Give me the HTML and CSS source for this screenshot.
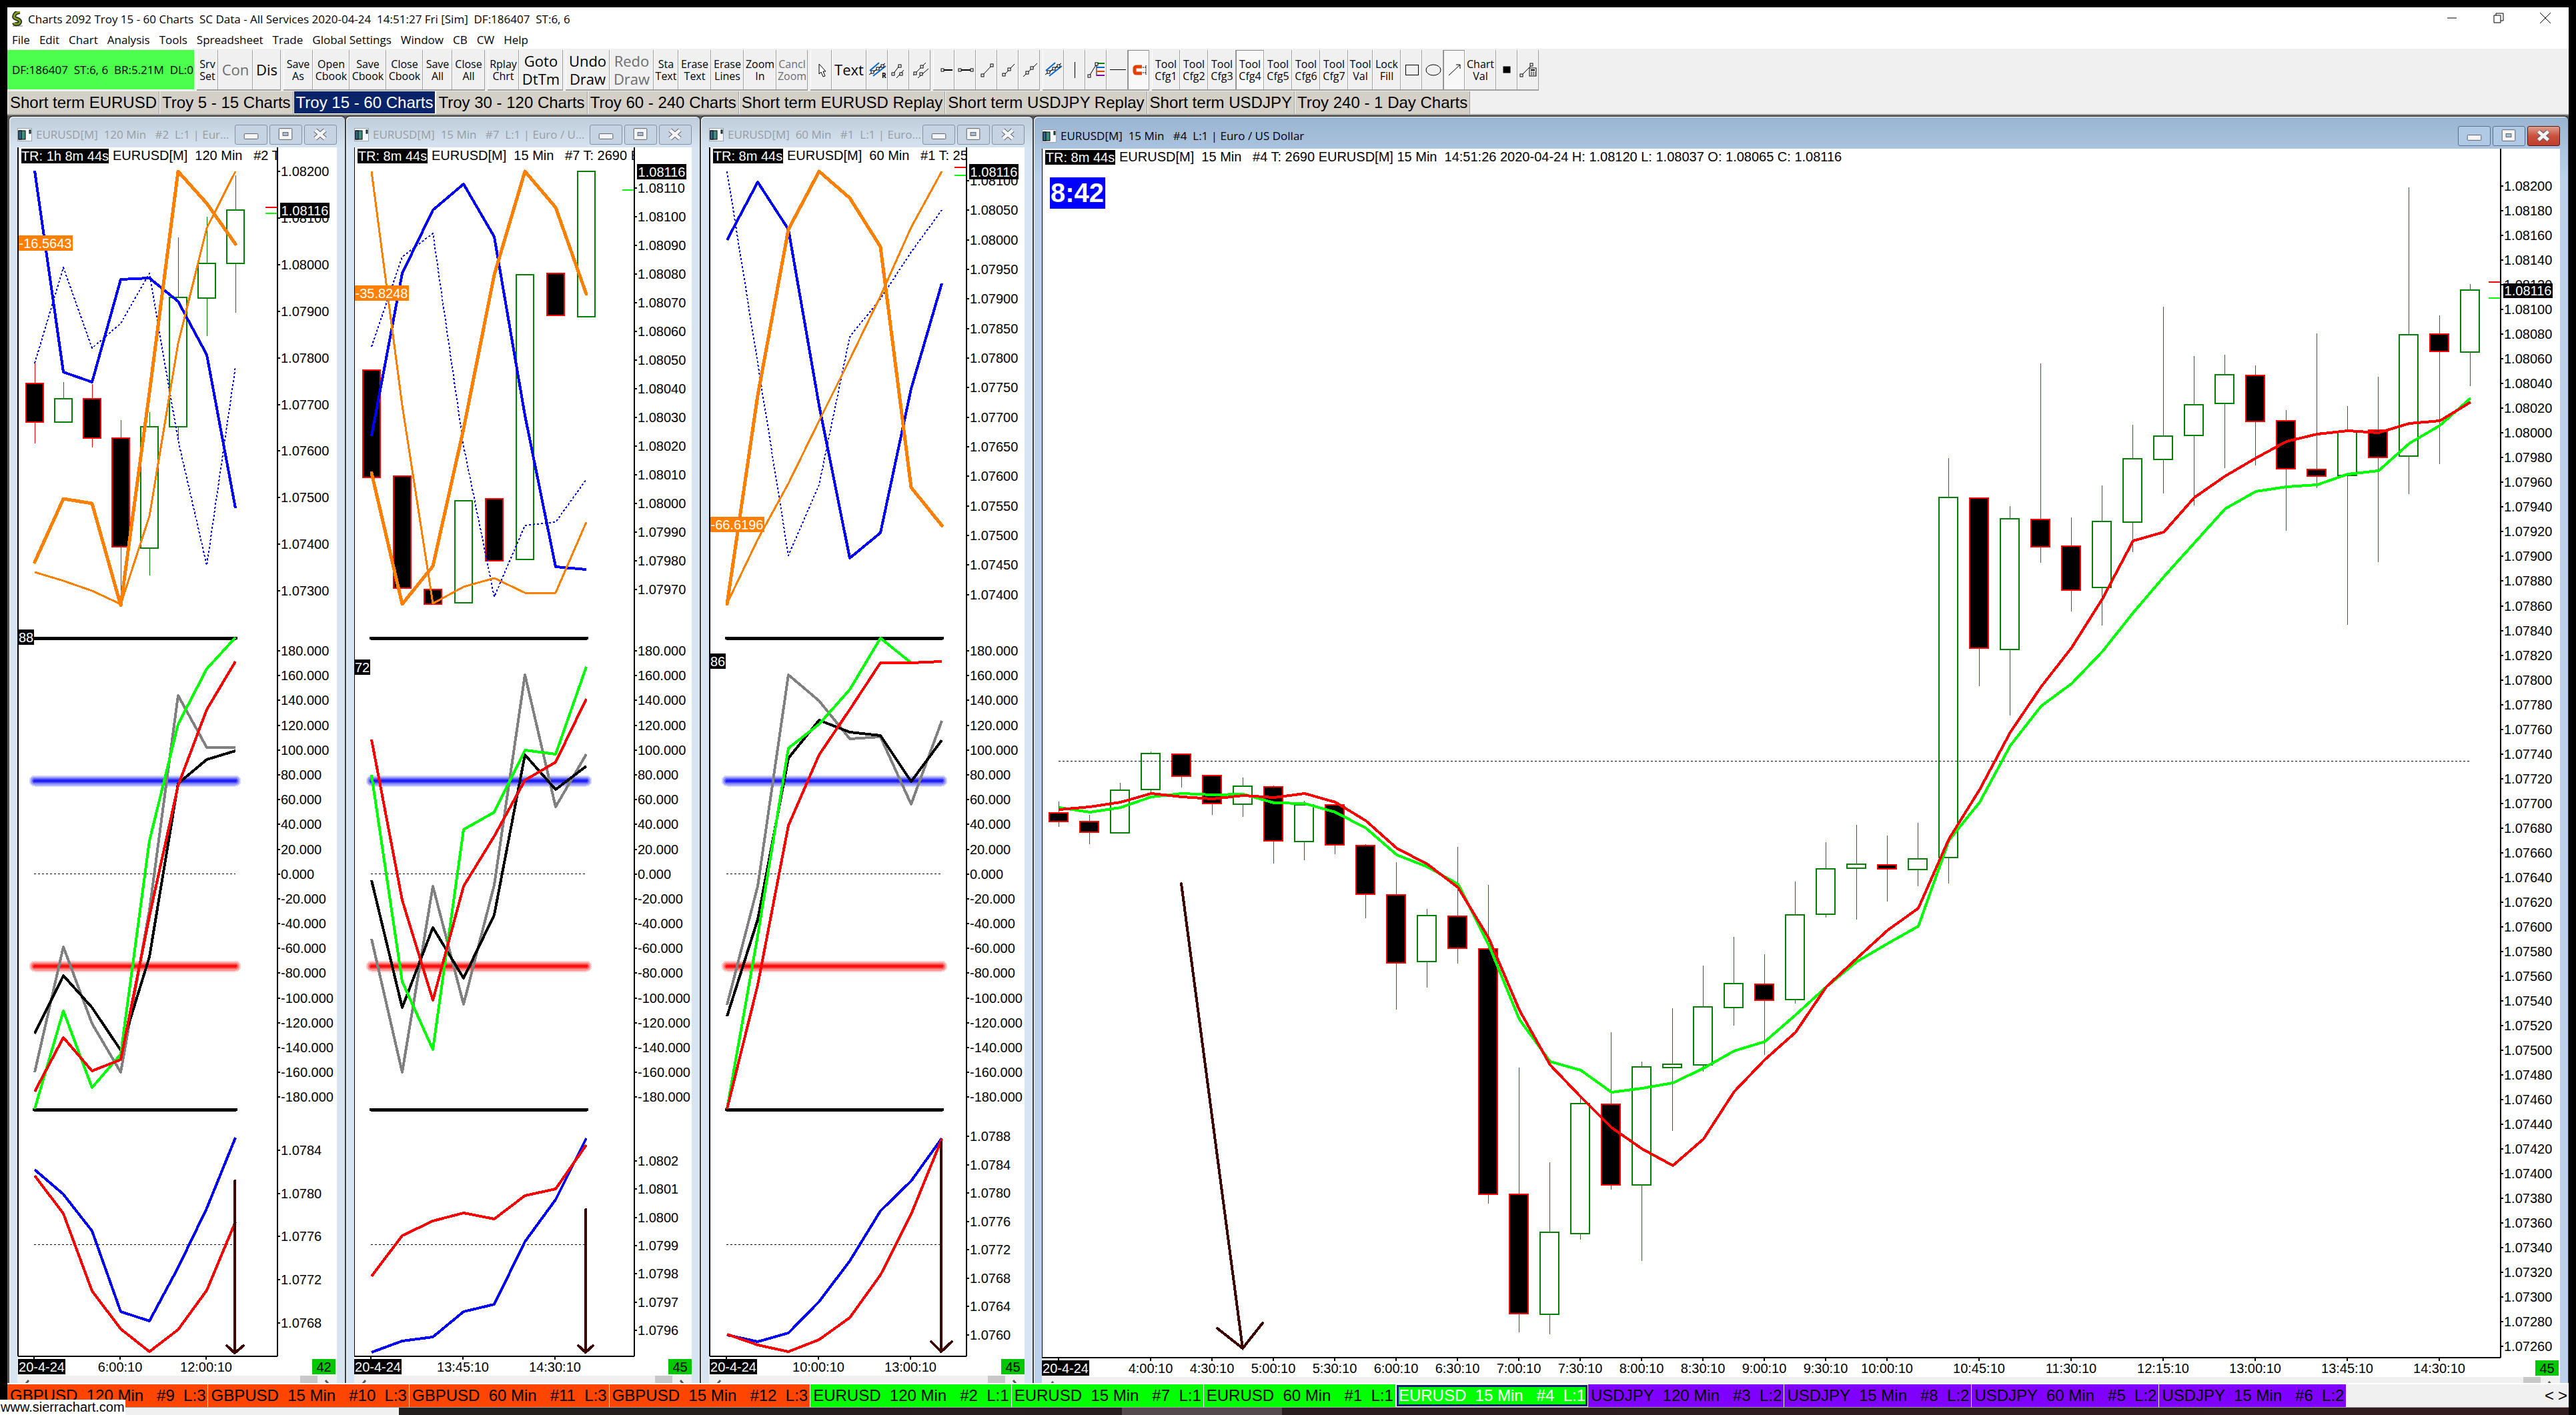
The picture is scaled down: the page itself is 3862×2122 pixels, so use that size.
FILE: index.html
```html
<!DOCTYPE html>
<html lang="en">
<head>
<meta charset="utf-8">
<title>Charts 2092 Troy 15 - 60 Charts</title>
<link rel="stylesheet" href="styles.css">
</head>
<body>
<svg class="defs" aria-hidden="true">
  <symbol id="i-rays" viewBox="0 0 32 32"><path d="M5 17L19 5M10 25L29 10" stroke="#0066cc" stroke-width="2"/><path d="M7 21L25 9M4 23L28 6"/><g fill="#fff"><rect x="7" y="17" width="4" height="4"/><rect x="15" y="12" width="4" height="4"/><rect x="22" y="8" width="4" height="4"/></g></symbol>
  <symbol id="i-app" viewBox="0 0 22 20"><rect x=".5" y=".5" width="21" height="19" fill="#f4f8fb" stroke="#9aa4ae"/><rect x="2" y="4" width="10" height="13" fill="#3f8f7d"/><rect x="2" y="4" width="4" height="13" fill="#2f6f9a"/><rect x="18" y="3" width="2" height="5" fill="#3f8f7d"/></symbol>
  <symbol id="i-min" viewBox="0 0 48 28"><rect x="13.500" y="12.500" width="21" height="8" rx="1" fill="#f5f5f5" stroke="#5a5f68"/></symbol>
  <symbol id="i-max" viewBox="0 0 48 28"><rect x="13.500" y="4.500" width="20" height="17" rx="1" fill="#f5f5f5" stroke="#5a5f68"/><rect x="19.500" y="10.500" width="8" height="5" fill="#a9bdd6" stroke="#5a5f68"/></symbol>
  <symbol id="i-close" viewBox="0 0 48 28"><path d="M16 7L31 20M31 7L16 20" stroke="#5a5f68" stroke-width="7"/><path d="M16 7L31 20M31 7L16 20" stroke="#f5f5f5" stroke-width="5"/></symbol>
  <symbol id="i-left" viewBox="0 0 12 12"><path d="M8 7L3 13" stroke="#555" stroke-width="3"/></symbol>
  <symbol id="i-right" viewBox="0 0 12 12"><path d="M4 7L9 13" stroke="#555" stroke-width="3"/></symbol>
</svg>
<main class="app">
  <header class="titlebar">
    <svg class="logo" viewBox="0 0 20 24" aria-hidden="true"><path d="M3 21h15v2H3z" fill="#bbb"/><path d="M14 1c-6 0-9 4-9 7 0 4 10 3 9 8-1 4-8 4-9 1" fill="none" stroke="#222" stroke-width="6"/><path d="M14 1c-6 0-9 4-9 7 0 4 10 3 9 8-1 4-8 4-9 1" fill="none" stroke="#7c9c1c" stroke-width="3"/></svg>
    <h1>Charts 2092 Troy 15 - 60 Charts  SC Data - All Services 2020-04-24  14:51:27 Fri [Sim]  DF:186407  ST:6, 6</h1>
    <div class="sys">
      <button aria-label="Minimize"><svg viewBox="0 0 16 16"><path d="M1 8H15"/></svg></button>
      <button aria-label="Restore"><svg viewBox="0 0 16 16"><path d="M1 4H11V15H1ZM4 4V1H15V12H11"/></svg></button>
      <button aria-label="Close"><svg viewBox="0 0 16 16"><path d="M0 0L16 16M16 0L0 16"/></svg></button>
    </div>
  </header>
  <nav class="menu">
    <button>File</button><button>Edit</button><button>Chart</button><button>Analysis</button><button>Tools</button><button>Spreadsheet</button><button>Trade</button><button>Global Settings</button><button>Window</button><button>CB</button><button>CW</button><button>Help</button>
  </nav>
  <div class="toolbar">
    <div class="status">DF:186407  ST:6, 6  BR:5.21M  DL:0</div>
    <div class="group"><button class="w32">Srv<br>Set</button><button class="w52 big" disabled>Con</button><button class="w42 big">Dis</button></div>
    <div class="group"><button class="w44">Save<br>As</button><button class="w55">Open<br>Cbook</button><button class="w55">Save<br>Cbook</button><button class="w55">Close<br>Cbook</button><button class="w44">Save<br>All</button><button class="w49">Close<br>All</button></div>
    <div class="group"><button class="w47">Rplay<br>Chrt</button><button class="w66 big">Goto<br>DtTm</button></div>
    <div class="group"><button class="w66 big">Undo<br>Draw</button><button class="w66 big" disabled>Redo<br>Draw</button><button class="w37">Sta<br>Text</button><button class="w49">Erase<br>Text</button><button class="w49">Erase<br>Lines</button><button class="w49">Zoom<br>In</button><button class="w47" disabled>Cancl<br>Zoom</button></div>
    <div class="group">
      <button class="w32" aria-label="Pointer"><svg class="ic" viewBox="0 0 32 32"><path d="M13 7V22L16 19L19 26L22 25L19 18H23Z" fill="#fff"/></svg></button>
      <button class="w52 big">Text</button>
      <button class="w32" aria-label="Parallel rays R"><svg class="ic" viewBox="0 0 32 32"><use href="#i-rays"/><text x="23" y="28" class="mark">R</text></svg></button>
      <button class="w32" aria-label="Pitchfork"><svg class="ic" viewBox="0 0 32 32"><path d="M8 22L17 10M13 28L24 16"/><g fill="#fff"><rect x="6" y="20" width="4" height="4"/><rect x="16" y="8" width="4" height="4"/><rect x="18" y="20" width="4" height="4"/></g></svg></button>
      <button class="w32" aria-label="Channel"><svg class="ic" viewBox="0 0 32 32"><path d="M6 24L25 5M13 28L29 14"/><g fill="#fff"><rect x="7" y="19" width="4" height="4"/><rect x="17" y="9" width="4" height="4"/><rect x="16" y="20" width="4" height="4"/></g></svg></button>
    </div>
    <div class="group">
      <button class="w32" aria-label="Horizontal ray"><svg class="ic" viewBox="0 0 32 32"><path d="M14 16H29" stroke-width="2"/><rect x="12" y="14" width="4" height="4" fill="#fff"/></svg></button>
      <button class="w32" aria-label="Horizontal segment"><svg class="ic" viewBox="0 0 32 32"><path d="M8 16H26" stroke-width="2"/><g fill="#fff"><rect x="6" y="14" width="4" height="4"/><rect x="24" y="14" width="4" height="4"/></g></svg></button>
      <button class="w32" aria-label="Line"><svg class="ic" viewBox="0 0 32 32"><path d="M10 24L24 9"/><g fill="#fff"><rect x="8" y="22" width="4" height="4"/><rect x="22" y="7" width="4" height="4"/></g></svg></button>
      <button class="w32" aria-label="Ray"><svg class="ic" viewBox="0 0 32 32"><path d="M10 24L26 7"/><g fill="#fff"><rect x="8" y="21" width="4" height="4"/><rect x="16" y="13" width="4" height="4"/></g></svg></button>
      <button class="w32" aria-label="Extended line"><svg class="ic" viewBox="0 0 32 32"><path d="M7 26L28 6"/><g fill="#fff"><rect x="11" y="18" width="4" height="4"/><rect x="18" y="11" width="4" height="4"/></g></svg></button>
    </div>
    <div class="group">
      <button class="w32" aria-label="Parallel rays"><svg class="ic"><use href="#i-rays"/></svg></button>
      <button class="w32" aria-label="Vertical line"><svg class="ic" viewBox="0 0 32 32"><path d="M16.500 4V28"/></svg></button>
      <button class="w32" aria-label="Retracement"><svg class="ic" viewBox="0 0 32 32"><path d="M6 25L17 7M17 6V25"/><path d="M17 6H29" stroke="#008000" stroke-width="2"/><path d="M17 12H29" stroke="#0066cc" stroke-width="2"/><path d="M17 18H29" stroke="#e04000" stroke-width="2"/><path d="M17 24H29" stroke="#8000a0" stroke-width="2"/><g fill="#fff"><rect x="4" y="23" width="4" height="4"/><rect x="15" y="5" width="4" height="4"/></g></svg></button>
      <button class="w32" aria-label="Horizontal line"><svg class="ic" viewBox="0 0 32 32"><path d="M5 15.500H29"/></svg></button>
      <button class="w32 on" aria-label="Snap"><svg class="ic" viewBox="0 0 32 32"><path d="M21 11H13Q10 11 10 14V18Q10 21 13 21H21" stroke="#e04000" stroke-width="5"/><path d="M27 9V24M22 12H27M22 20H27" stroke-dasharray="2 1"/></svg></button>
    </div>
    <div class="group">
      <button class="w42">Tool<br>Cfg1</button><button class="w42">Tool<br>Cfg2</button><button class="w42">Tool<br>Cfg3</button><button class="w42 on">Tool<br>Cfg4</button><button class="w42">Tool<br>Cfg5</button><button class="w42">Tool<br>Cfg6</button><button class="w42">Tool<br>Cfg7</button><button class="w37">Tool<br>Val</button><button class="w42">Lock<br>Fill</button>
      <button class="w32" aria-label="Rectangle"><svg class="ic" viewBox="0 0 32 32"><rect x="7.500" y="8.500" width="19" height="15"/></svg></button>
      <button class="w32" aria-label="Ellipse"><svg class="ic" viewBox="0 0 32 32"><ellipse cx="17" cy="16" rx="11" ry="8"/></svg></button>
      <button class="w32 on" aria-label="Arrow"><svg class="ic" viewBox="0 0 32 32"><path d="M8 24L25 8M19 8H25V14"/></svg></button>
      <button class="w47">Chart<br>Val</button>
      <button class="w32" aria-label="Marker"><svg class="ic" viewBox="0 0 32 32"><rect x="11" y="11" width="10" height="9" fill="#000"/></svg></button>
      <button class="w32" aria-label="Calculator"><svg class="ic" viewBox="0 0 32 32"><path d="M6 24L21 9"/><g fill="#fff"><rect x="4" y="22" width="4" height="4"/><rect x="19" y="6" width="4" height="4"/><rect x="18" y="13" width="10" height="12"/></g><path d="M20 16H26" stroke-width="2"/><path d="M20 19H27M20 21H27M20 23H27" stroke-dasharray="2 1"/></svg></button>
    </div>
  </div>
  <nav class="books">
    <button>Short term EURUSD</button><button>Troy 5 - 15 Charts</button><button class="current">Troy 15 - 60 Charts</button><button>Troy 30 - 120 Charts</button><button>Troy 60 - 240 Charts</button><button>Short term EURUSD Replay</button><button>Short term USDJPY Replay</button><button>Short term USDJPY</button><button>Troy 240 - 1 Day Charts</button>
  </nav>
  <div class="mdi">
    <section class="win">
      <header><svg class="wicon"><use href="#i-app"/></svg><h2>EURUSD[M]  120 Min   #2  L:1 | Eur...</h2><button aria-label="Minimize"><svg><use href="#i-min"/></svg></button><button aria-label="Maximize"><svg><use href="#i-max"/></svg></button><button aria-label="Close"><svg><use href="#i-close"/></svg></button></header>
      <svg class="chart" id="c2" viewBox="26 221 479 1842"></svg>
      <div class="scroll"><svg><use href="#i-left"/></svg><i></i><svg><use href="#i-right"/></svg></div>
    </section>
    <section class="win">
      <header><svg class="wicon"><use href="#i-app"/></svg><h2>EURUSD[M]  15 Min   #7  L:1 | Euro / U...</h2><button aria-label="Minimize"><svg><use href="#i-min"/></svg></button><button aria-label="Maximize"><svg><use href="#i-max"/></svg></button><button aria-label="Close"><svg><use href="#i-close"/></svg></button></header>
      <svg class="chart" id="c7" viewBox="531 221 506 1842"></svg>
      <div class="scroll"><svg><use href="#i-left"/></svg><i></i><svg><use href="#i-right"/></svg></div>
    </section>
    <section class="win">
      <header><svg class="wicon"><use href="#i-app"/></svg><h2>EURUSD[M]  60 Min   #1  L:1 | Euro...</h2><button aria-label="Minimize"><svg><use href="#i-min"/></svg></button><button aria-label="Maximize"><svg><use href="#i-max"/></svg></button><button aria-label="Close"><svg><use href="#i-close"/></svg></button></header>
      <svg class="chart" id="c1" viewBox="1063 221 473 1842"></svg>
      <div class="scroll"><svg><use href="#i-left"/></svg><i></i><svg><use href="#i-right"/></svg></div>
    </section>
    <section class="win active">
      <header><svg class="wicon"><use href="#i-app"/></svg><h2>EURUSD[M]  15 Min   #4  L:1 | Euro / US Dollar</h2><button aria-label="Minimize"><svg><use href="#i-min"/></svg></button><button aria-label="Maximize"><svg><use href="#i-max"/></svg></button><button class="close" aria-label="Close"><svg><use href="#i-close"/></svg></button></header>
      <svg class="chart" id="c4" viewBox="1562 223 2276 1842"></svg>
      <div class="scroll"><svg><use href="#i-left"/></svg><i></i><svg><use href="#i-right"/></svg></div>
    </section>
  </div>
  <nav class="wintabs">
    <button class="gbp">GBPUSD  120 Min   #9  L:3</button><button class="gbp">GBPUSD  15 Min   #10  L:3</button><button class="gbp">GBPUSD  60 Min   #11  L:3</button><button class="gbp">GBPUSD  15 Min   #12  L:3</button><button class="eur">EURUSD  120 Min   #2  L:1</button><button class="eur">EURUSD  15 Min   #7  L:1</button><button class="eur">EURUSD  60 Min   #1  L:1</button><button class="eur current">EURUSD  15 Min   #4  L:1</button><button class="jpy">USDJPY  120 Min   #3  L:2</button><button class="jpy">USDJPY  15 Min   #8  L:2</button><button class="jpy">USDJPY  60 Min   #5  L:2</button><button class="jpy">USDJPY  15 Min   #6  L:2</button>
    <div class="pager"><button aria-label="Previous tabs">&lt;</button><button aria-label="Next tabs">&gt;</button></div>
  </nav>
</main>
<footer class="taskbar"><div class="strip"></div><div class="task"></div><a class="hint" href="#">www.sierrachart.com</a></footer>
<script src="charts.js"></script>
</body>
</html>
```
FILE: styles.css
```css
* { box-sizing: border-box; }
html, body { height: 100%; }
body { margin: 0; padding: 11px 11px 0; background: #000; color: #000; display: flex; flex-direction: column; overflow: hidden; font-family: "Liberation Sans", sans-serif; }
button { border: 0; margin: 0; padding: 0; background: none; color: inherit; font: inherit; }
h1, h2 { margin: 0; font-weight: 400; }
.defs { position: absolute; width: 0; height: 0; }
.defs symbol, .ic { fill: none; stroke: #000; }
.app { background: #f0f0f0; flex: 1; min-height: 0; display: flex; flex-direction: column; }

.titlebar { background: #fff; height: 36px; display: flex; align-items: center; padding-left: 5px; }
.logo { width: 20px; height: 24px; }
.titlebar h1 { font: 17px/24px "Open Sans", sans-serif; white-space: pre; margin-left: 6px; flex: 1; }
.sys { display: flex; }
.sys button { width: 70px; height: 34px; }
.sys svg { width: 16px; height: 16px; fill: none; stroke: #000; }
.menu { background: #fff; height: 26px; display: flex; gap: 14px; padding-left: 7px; font: 17px/26px "Open Sans", sans-serif; }

.toolbar { display: flex; gap: 4px; height: 63px; padding-top: 2px; font-family: "Open Sans", sans-serif; }
.status { width: 280px; height: 59px; background: #4dff4d; padding-left: 7px; font-size: 17px; line-height: 60px; white-space: pre; overflow: hidden; }
.group { display: flex; border-bottom: 2px solid #a0a0a0; }
.group button { font-size: 16px; line-height: 18px; border-left: 1px solid #fff; border-right: 1px solid #a0a0a0; white-space: nowrap; display: flex; align-items: center; justify-content: center; text-align: center; }
.group button:disabled { color: #6d6d6d; }
.group .big { font-size: 22px; line-height: 27px; }
.group .on { background: #f8f8f8; border-left-color: #888; border-top: 1px solid #888; }
.ic { width: 32px; height: 32px; flex: none; }
.mark { font-size: 10px; fill: #000; stroke: none; font-weight: 700; }
.w32 { width: 32px; } .w37 { width: 37px; } .w42 { width: 42px; } .w44 { width: 44px; } .w47 { width: 47px; }
.w49 { width: 49px; } .w52 { width: 52px; } .w55 { width: 55px; } .w66 { width: 66px; }

.books { display: flex; height: 37px; border-bottom: 2px solid #a0a0a0; padding-top: 1px; }
.books button { background: #d4d0c8; font-size: 24px; line-height: 32px; padding: 0 3px; border-right: 1px solid #a0a0a0; border-left: 1px solid #fff; white-space: nowrap; }
.books .current { background: #0a246a; color: #fff; border: 1px solid #fff; border-top: 0; }

.mdi { flex: 1; min-height: 0; overflow: hidden; display: grid; grid-template-columns: minmax(0, 505fr) minmax(0, 532fr) minmax(0, 499fr) minmax(0, 2302fr); align-items: start; padding-left: 2px; background: #5a5a5a; }
.win { background: linear-gradient(#bfcddb, #d7e4f2 48px); border: solid #3c3c3c; border-width: 2px 1px 0; border-radius: 7px 7px 0 0; padding: 0 12px; box-shadow: inset 1px 1px #fff; }
.win header { display: flex; align-items: center; gap: 3px; height: 46px; padding-top: 8px; }
.win.active { background: linear-gradient(#99b4d1, #b9d1ea 90px); }
.win.active header { height: 48px; padding-top: 10px; }
.wicon { width: 22px; height: 20px; flex: none; }
.win h2 { flex: 1; min-width: 0; overflow: hidden; font: 17px/24px "Open Sans", sans-serif; white-space: pre; color: #989da3; padding-left: 3px; }
.win.active h2 { color: #000; }
.win header button { width: 49px; height: 30px; border: 1px solid #8593a6; border-radius: 3px; background: #c5d3e2; display: flex; align-items: center; justify-content: center; flex: none; }
.win header button svg { width: 47px; height: 28px; }
.win.active header button { background: #b0c9e4; border-color: #5b6f8a; }
.win.active header .close { background: linear-gradient(#e0a090, #c9503c 50%, #c04030); border-color: #5a1510; }
.chart { display: block; width: 100%; height: auto; background: #fff; font: 20px "Liberation Sans", sans-serif; shape-rendering: crispEdges; }
.scroll { display: flex; background: #f0f0f0; height: 12px; padding: 0 9px; }
.scroll i { width: 26px; background: #c8c8c8; margin: 0 8px 0 auto; }
.scroll svg { width: 12px; height: 12px; flex: none; }

.wintabs { display: flex; height: 37px; flex: none; border-top: 2px solid #fff; border-bottom: 1px solid #a0a0a0; }
.wintabs > button { font-size: 24px; line-height: 34px; padding: 0 3px 0 4px; white-space: pre; border-right: 1px solid #fff; }
.gbp { background: #ff4500; } .eur { background: #0f0; } .jpy { background: #8000ff; }
.wintabs .current { color: #fff; line-height: 26px; padding: 0; border: solid #0a246a; border-width: 4px; outline: 1px solid #fff; outline-offset: -1px; }
.pager { margin-left: auto; display: flex; font-size: 24px; gap: 6px; padding-right: 2px; }

.taskbar { position: relative; height: 11px; flex: none; display: flex; background: linear-gradient(90deg, #33191d, #231c1e 10%, #231f1d 20%, #2c1c20 60%, #331c20); margin-left: -11px; }
.strip { width: 598px; background: #f0f0f0; }
.task { width: 240px; margin-left: 1084px; background: #554a4e; }
.hint { position: absolute; left: 0; bottom: 0; background: #fff; color: #000; text-decoration: none; font-size: 20px; line-height: 23px; padding: 0 1px; }
```
FILE: charts.js
```js
const line = (x0, step, ys, color, width, extra = '') =>
  `<polyline points="${ys.map((y, i) => (x0 + step * i) + ',' + y).join(' ')}" fill="none" stroke="${color}" stroke-width="${width}" stroke-linejoin="round" ${extra}/>`;
const rule = (x1, y1, x2, y2, color, width, extra = '') =>
  `<line x1="${x1}" y1="${y1}" x2="${x2}" y2="${y2}" stroke="${color}" stroke-width="${width}" ${extra}/>`;
const text = (x, y, s, fill = '#000', extra = '') =>
  `<text x="${x}" y="${y}" fill="${fill}" xml:space="preserve" ${extra}>${s}</text>`;
const tag = (x, y, w, h, s, bg, fg = '#fff') =>
  `<rect x="${x}" y="${y}" width="${w}" height="${h}" fill="${bg}"/>` + text(x + w / 2, y + h / 2 + 7, s, fg, 'text-anchor="middle"');

// Candle: [high, body top, body bottom, low, direction]
const candles = (x0, step, half, list) => list.map(([hi, top, bot, lo, dir], i) => {
  const x = x0 + step * i, up = dir === 'g', c = up ? '#008000' : '#ff0000';
  return rule(x, hi, x, top, c, 1) + rule(x, bot, x, lo, c, 1) +
    `<rect x="${x - half + 1}" y="${top}" width="${2 * half - 2}" height="${bot - top}" fill="${up ? 'none' : '#000'}" stroke="${c}" stroke-width="2"/>`;
}).join('');

const axis = (x, y0, step, v0, dv, n, digits) => {
  let out = '';
  for (let i = 0; i < n; i++) {
    const y = Math.round(y0 + step * i);
    out += rule(x, y, x + 4, y, '#000', 2) + text(x + 5, y + 7, (v0 - dv * i).toFixed(digits));
  }
  return out;
};
const arrow = (x1, y1, x2, y2, a, b) =>
  `<path d="M${x1} ${y1}L${x2} ${y2}M${a}L${x2} ${y2}L${b}" fill="none" stroke="#3c0000" stroke-width="4" stroke-linecap="round"/>`;
const dots = (x1, x2, y) => rule(x1, y, x2, y, '#000', 1, 'stroke-dasharray="3 3"');

function band(x1, x2, y, color) {
  return [[17, .2], [13, .3], [8, .5], [4, 1]].map(([w, o]) =>
    rule(x1, y, x2, y, color, w, `stroke-opacity="${o}" stroke-linecap="round"`)).join('');
}

function frame(c) {
  let s = rule(c.left, 221, c.left, c.base, '#000', 2) + rule(c.axis, 221, c.axis, c.base, '#000', 2) +
    rule(c.left, c.base, c.axis, c.base, '#000', 2);
  c.times.forEach(([x, t]) => { s += rule(x, c.base, x, c.base + 5, '#000', 2) + (t && text(x, c.base + 23, t, '#000', 'text-anchor="middle"')); });
  s += tag(c.left, c.base + 4, 71, 23, '20-4-24', '#000') + tag(c.countX, c.base + 4, 35, 23, c.count, '#00c800', '#000');
  s += `<clipPath id="clip-${c.id}"><rect x="${c.left}" y="221" width="${c.axis - c.left - 1}" height="40"/></clipPath>`;
  s += `<g clip-path="url(#clip-${c.id})">${tag(c.left + 5, c.head - 17, c.timerW, 22, c.timer, '#000')}${text(c.left + 11 + c.timerW, c.head, c.title)}</g>`;
  return s;
}

function small(c) {
  const d = c.step, x = c.x, end = x + 7 * d;
  let s = axis(c.axis, ...c.price, 5) + axis(c.axis, 976, 37.19, 180, 20, 19, 3) + axis(c.axis, ...c.low, 4);
  s += candles(x, d, c.half, c.candles);
  s += line(x, d, c.dotted, '#0000ff', 2, 'stroke-dasharray="3 3"') + line(x, d, c.blue, '#0000ff', 4) +
    line(x, d, c.orange, '#ff8000', 5, 'stroke-linecap="round"') + line(x, d, c.thin, '#ff8000', 3);
  s += rule(x - 1, 957, end + 1, 957, '#000', 5, 'stroke-linecap="round"') + rule(x - 1, 1664, end + 1, 1664, '#000', 5, 'stroke-linecap="round"');
  s += band(x, end, 1171, '#2020ff') + band(x, end, 1449, '#ff1010') + dots(x - 1, end, 1310.5);
  s += line(x, d, c.osc[0], '#808080', 4) + line(x, d, c.osc[1], '#000', 4) + line(x, d, c.osc[2], '#00ff00', 4) + line(x, d, c.osc[3], '#ff0000', 4);
  s += dots(x - 1, end, 1866.5) + line(x, d, c.ma[0], '#0000ff', 4) + line(x, d, c.ma[1], '#ff0000', 4);
  s += arrow(...c.arrow);
  s += tag(c.left, c.badgeY, 82, 23, c.badge, '#ff8000') + tag(c.left, c.scoreY, 24, 23, c.score, '#000');
  c.ticks.forEach(([y, col]) => { s += rule(c.axis - 18, y, c.axis - 1, y, col, 2); });
  s += tag(c.axis + 4, c.lastY, 74, 23, '1.08116', '#000') + frame(c);
  document.getElementById(c.id).innerHTML = s;
}

small({
  id: 'c2', left: 27, axis: 416, base: 2034, x: 52, step: 43, half: 14, countX: 468, count: '42',
  times: [[51, ''], [180, '6:00:10'], [309, '12:00:10']], head: 240, timer: 'TR: 1h 8m 44s', timerW: 131, title: 'EURUSD[M]  120 Min   #2 T',
  price: [257, 69.9, 1.082, .001, 10], low: [1725, 64.7, 1.0784, .0004, 5],
  candles: [[541, 575, 633, 665, 'r'], [573, 598, 633, 633, 'g'], [576, 598, 657, 671, 'r'], [630, 657, 820, 893, 'r'], [618, 640, 822, 863, 'g'], [356, 446, 640, 657, 'g'], [325, 395, 447, 504, 'g'], [263, 315, 395, 469, 'g']],
  dotted: [545, 401, 522, 485, 410, 660, 848, 550], blue: [256, 558, 573, 419, 417, 452, 532, 762],
  orange: [843, 748, 755, 908, 589, 257, 305, 366], thin: [858, 871, 886, 906, 774, 515, 342, 257],
  osc: [[1608, 1420, 1535, 1608, 1365, 1043, 1121, 1121], [1550, 1463, 1511, 1575, 1435, 1175, 1139, 1126], [1663, 1516, 1631, 1581, 1261, 1086, 1003, 956], [1637, 1556, 1606, 1589, 1374, 1178, 1064, 992]],
  ma: [[1754, 1791, 1846, 1967, 1981, 1901, 1812, 1706], [1763, 1820, 1936, 1993, 2027, 1994, 1935, 1832]],
  arrow: [352, 1771, 352, 2029, '340 2018', '365 2018'], badgeY: 353, badge: '-16.5643', scoreY: 944, score: '88',
  ticks: [[311, '#ff0000'], [320, '#00ff00']], lastY: 304
});
small({
  id: 'c7', left: 531, axis: 951, base: 2034, x: 557, step: 46, half: 14, countX: 1002, count: '45',
  times: [[556, ''], [694, '13:45:10'], [832, '14:30:10']], head: 240, timer: 'TR: 8m 44s', timerW: 105, title: 'EURUSD[M]  15 Min   #7 T: 2690 E',
  price: [282, 43.03, 1.0811, .0001, 15], low: [1741, 42.3, 1.0802, .0001, 7],
  candles: [[555, 555, 716, 716, 'r'], [714, 714, 882, 882, 'r'], [884, 884, 906, 906, 'r'], [751, 751, 904, 904, 'g'], [748, 748, 841, 841, 'r'], [412, 412, 839, 839, 'g'], [410, 410, 473, 473, 'r'], [257, 257, 475, 475, 'g']],
  dotted: [520, 385, 350, 669, 895, 788, 783, 719], blue: [654, 410, 315, 276, 355, 623, 850, 854],
  orange: [709, 906, 849, 643, 412, 257, 311, 441], thin: [257, 608, 905, 880, 867, 889, 889, 783],
  osc: [[1408, 1608, 1329, 1506, 1327, 1012, 1210, 1131], [1320, 1511, 1391, 1467, 1372, 1132, 1184, 1149], [1162, 1472, 1574, 1244, 1218, 1125, 1131, 1000], [1109, 1350, 1500, 1329, 1254, 1170, 1143, 1048]],
  ma: [[2028, 2011, 2005, 1967, 1956, 1862, 1799, 1707], [1914, 1853, 1831, 1819, 1828, 1793, 1783, 1717]],
  arrow: [878, 1814, 878, 2028, '867 2018', '889 2018'], badgeY: 428, badge: '-35.8248', scoreY: 989, score: '72',
  ticks: [[285, '#00ff00']], lastY: 246
});
small({
  id: 'c1', left: 1064, axis: 1449, base: 2034, x: 1090, step: 46, half: 14, countX: 1501, count: '45',
  times: [[1089, ''], [1227, '10:00:10'], [1365, '13:00:10']], head: 240, timer: 'TR: 8m 44s', timerW: 105, title: 'EURUSD[M]  60 Min   #1 T: 25',
  price: [271, 44.33, 1.081, .0005, 15], low: [1704, 42.57, 1.0788, .0004, 8],
  candles: [],
  dotted: [257, 545, 833, 727, 505, 448, 378, 315], blue: [360, 273, 344, 608, 837, 799, 583, 425],
  orange: [906, 593, 344, 257, 297, 370, 731, 788], thin: [905, 809, 725, 631, 539, 444, 341, 257],
  osc: [[1507, 1329, 1012, 1051, 1108, 1105, 1206, 1081], [1524, 1379, 1137, 1080, 1098, 1103, 1172, 1110], [1663, 1403, 1122, 1086, 1034, 957, 994, 992], [1663, 1477, 1238, 1132, 1064, 994, 994, 992]],
  ma: [[2002, 2012, 1999, 1952, 1891, 1816, 1771, 1707], [2001, 2017, 2027, 2009, 1976, 1912, 1821, 1708]],
  arrow: [1411, 1713, 1411, 2027, '1396 2012', '1427 2012'], badgeY: 775, badge: '-66.6196', scoreY: 980, score: '86',
  ticks: [[251, '#ff0000'], [263, '#00ff00']], lastY: 246
});

const bars = [
  [1202, 1219, 1232, 1240, 'r'], [1222, 1232, 1248, 1266, 'r'], [1174, 1185, 1249, 1249, 'g'], [1127, 1130, 1184, 1190, 'g'], [1131, 1131, 1164, 1181, 'r'],
  [1163, 1163, 1205, 1222, 'r'], [1166, 1179, 1206, 1225, 'g'], [1178, 1180, 1261, 1295, 'r'], [1201, 1207, 1262, 1290, 'g'], [1207, 1207, 1267, 1281, 'r'],
  [1266, 1268, 1341, 1377, 'r'], [1293, 1342, 1444, 1514, 'r'], [1363, 1373, 1442, 1481, 'g'], [1270, 1374, 1422, 1445, 'r'], [1327, 1423, 1791, 1805, 'r'],
  [1601, 1791, 1970, 1998, 'r'], [1743, 1848, 1971, 2001, 'g'], [1646, 1655, 1850, 1859, 'g'], [1548, 1656, 1777, 1784, 'r'], [1592, 1600, 1777, 1891, 'g'],
  [1512, 1596, 1601, 1696, 'g'], [1448, 1510, 1597, 1607, 'g'], [1405, 1475, 1511, 1538, 'g'], [1431, 1476, 1500, 1582, 'r'], [1322, 1372, 1499, 1505, 'g'],
  [1263, 1303, 1371, 1376, 'g'], [1237, 1296, 1302, 1379, 'g'], [1253, 1297, 1303, 1352, 'r'], [1234, 1288, 1304, 1329, 'g'], [687, 746, 1286, 1325, 'g'],
  [747, 747, 972, 1029, 'r'], [759, 778, 974, 1073, 'g'], [545, 779, 820, 844, 'r'], [776, 819, 885, 917, 'r'], [728, 782, 881, 938, 'g'],
  [637, 688, 783, 828, 'g'], [460, 654, 689, 740, 'g'], [534, 607, 653, 758, 'g'], [532, 562, 605, 702, 'g'], [548, 563, 632, 698, 'r'],
  [615, 631, 703, 796, 'r'], [500, 704, 714, 732, 'r'], [609, 647, 713, 937, 'g'], [565, 645, 686, 843, 'r'], [281, 502, 684, 741, 'g'],
  [473, 501, 527, 696, 'r'], [426, 435, 528, 579, 'g']
];
const fast = [1211, 1218, 1211, 1195, 1190, 1192, 1191, 1204, 1205, 1218, 1242, 1282, 1300, 1326, 1417, 1529, 1592, 1605, 1638, 1632, 1624, 1602, 1576, 1562, 1522, 1480, 1442, 1415, 1389, 1260, 1203, 1118, 1059, 1025, 977, 919, 865, 814, 763, 737, 730, 727, 711, 706, 665, 638, 597];
const slow = [1214, 1210, 1203, 1190, 1195, 1198, 1193, 1196, 1190, 1203, 1231, 1272, 1296, 1331, 1407, 1515, 1597, 1645, 1691, 1723, 1748, 1708, 1637, 1589, 1548, 1480, 1437, 1395, 1362, 1258, 1184, 1098, 1030, 971, 898, 811, 798, 746, 714, 687, 662, 651, 646, 649, 635, 631, 603];
const main = {
  id: 'c4', left: 1562, axis: 3749, base: 2036, countX: 3801, count: '45', head: 242, timer: 'TR: 8m 44s', timerW: 105,
  title: 'EURUSD[M]  15 Min   #4 T: 2690 EURUSD[M] 15 Min  14:51:26 2020-04-24 H: 1.08120 L: 1.08037 O: 1.08065 C: 1.08116',
  times: [[1587, ''], [1725, '4:00:10'], [1817, '4:30:10'], [1909, '5:00:10'], [2001, '5:30:10'], [2093, '6:00:10'], [2185, '6:30:10'], [2277, '7:00:10'], [2369, '7:30:10'], [2461, '8:00:10'], [2553, '8:30:10'], [2645, '9:00:10'], [2737, '9:30:10'], [2829, '10:00:10'], [2967, '10:45:10'], [3105, '11:30:10'], [3243, '12:15:10'], [3381, '13:00:10'], [3519, '13:45:10'], [3657, '14:30:10']]
};
document.getElementById('c4').innerHTML =
  axis(3749, 279, 37.03, 1.082, .0002, 48, 5) + candles(1587, 46, 15, bars) + dots(1587, 3703, 1141.5) +
  line(1588, 46, fast, '#00ff00', 4) + line(1588, 46, slow, '#ff0000', 4) +
  arrow(1771, 1325, 1863, 2022, '1825 1992', '1893 1984') +
  rule(3731, 423, 3748, 423, '#ff0000', 2) + rule(3731, 447, 3748, 447, '#00ff00', 2) +
  tag(3753, 425, 74, 22, '1.08116', '#000') +
  '<rect x="1574" y="266" width="83" height="47" fill="#0000ff"/>' +
  text(1615, 303, '8:42', '#fff', 'text-anchor="middle" font-size="40" font-weight="700"') + frame(main);
```
